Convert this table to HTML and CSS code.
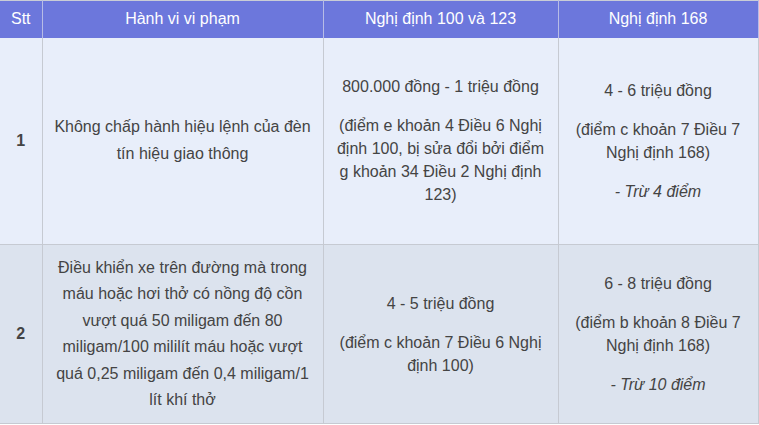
FILE: index.html
```html
<!DOCTYPE html>
<html lang="vi">
<head>
<meta charset="utf-8">
<link rel="stylesheet" href="styles.css">
</head>
<body>
<table class="fines">
  <colgroup>
    <col class="c-stt">
    <col class="c-act">
    <col class="c-old">
    <col class="c-new">
  </colgroup>
  <thead>
    <tr class="head">
      <th>Stt</th>
      <th>Hành vi vi phạm</th>
      <th>Nghị định 100 và 123</th>
      <th>Nghị định 168</th>
    </tr>
  </thead>
  <tbody>
    <tr class="row-a">
      <td class="num">1</td>
      <td class="act">Không chấp hành hiệu lệnh của đèn tín hiệu giao thông</td>
      <td>
        <p>800.000 đồng - 1 triệu đồng</p>
        <p>(điểm e khoản 4 Điều 6 Nghị định 100, bị sửa đổi bởi điểm g khoản 34 Điều 2 Nghị định 123)</p>
      </td>
      <td>
        <p>4 - 6 triệu đồng</p>
        <p>(điểm c khoản 7 Điều 7 Nghị định 168)</p>
        <p><em>- Trừ 4 điểm</em></p>
      </td>
    </tr>
    <tr class="row-b">
      <td class="num">2</td>
      <td class="act">Điều khiển xe trên đường mà trong máu hoặc hơi thở có nồng độ cồn vượt quá 50 miligam đến 80 miligam/100 mililít máu hoặc vượt quá 0,25 miligam đến 0,4 miligam/1 lít khí thở</td>
      <td>
        <p>4 - 5 triệu đồng</p>
        <p>(điểm c khoản 7 Điều 6 Nghị định 100)</p>
      </td>
      <td>
        <p>6 - 8 triệu đồng</p>
        <p>(điểm b khoản 8 Điều 7 Nghị định 168)</p>
        <p><em>- Trừ 10 điểm</em></p>
      </td>
    </tr>
  </tbody>
</table>
</body>
</html>
```

FILE: styles.css
```css
html, body {
  margin: 0;
  padding: 0;
  background: #ffffff;
}

.fines {
  border-collapse: collapse;
  table-layout: fixed;
  width: 758px;
  font-family: "Liberation Sans", Arial, sans-serif;
  font-size: 16px;
  color: #444444;
  border-top: 1px solid #c9cdd6;
}

.c-stt { width: 42px; }
.c-act { width: 281px; }
.c-old { width: 235px; }
.c-new { width: 200px; }

.fines th,
.fines td {
  border-right: 1px solid #c6cad2;
  border-bottom: 1px solid #c6cad2;
  text-align: center;
  vertical-align: middle;
  padding: 6px 10px;
}

.head {
  height: 37px;
  background: #6c77dc;
}

.head th {
  color: #ffffff;
  font-weight: normal;
  border-bottom: none;
  border-right-color: #b7bce6;
}

.row-a {
  height: 207px;
  background: #e8eefa;
}

.row-b {
  height: 179px;
  background: #dce3ee;
}

.num {
  font-weight: bold;
  padding: 6px 4px;
}

.act {
  line-height: 26.5px;
}

.fines p {
  margin: 16px 0;
  line-height: 23px;
}

.fines p:first-child { margin-top: 0; }
.fines p:last-child { margin-bottom: 0; }
```
